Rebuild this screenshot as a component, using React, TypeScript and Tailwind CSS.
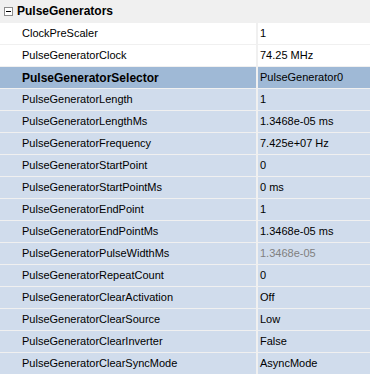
import React from "react";

type Row = { k: string; v: string; kind: "white" | "sel" | "blue"; dim?: boolean };

const rows: Row[] = [
  { k: "ClockPreScaler", v: "1", kind: "white" },
  { k: "PulseGeneratorClock", v: "74.25 MHz", kind: "white" },
  { k: "PulseGeneratorSelector", v: "PulseGenerator0", kind: "sel" },
  { k: "PulseGeneratorLength", v: "1", kind: "blue" },
  { k: "PulseGeneratorLengthMs", v: "1.3468e-05 ms", kind: "blue" },
  { k: "PulseGeneratorFrequency", v: "7.425e+07 Hz", kind: "blue" },
  { k: "PulseGeneratorStartPoint", v: "0", kind: "blue" },
  { k: "PulseGeneratorStartPointMs", v: "0 ms", kind: "blue" },
  { k: "PulseGeneratorEndPoint", v: "1", kind: "blue" },
  { k: "PulseGeneratorEndPointMs", v: "1.3468e-05 ms", kind: "blue" },
  { k: "PulseGeneratorPulseWidthMs", v: "1.3468e-05", kind: "blue", dim: true },
  { k: "PulseGeneratorRepeatCount", v: "0", kind: "blue" },
  { k: "PulseGeneratorClearActivation", v: "Off", kind: "blue" },
  { k: "PulseGeneratorClearSource", v: "Low", kind: "blue" },
  { k: "PulseGeneratorClearInverter", v: "False", kind: "blue" },
  { k: "PulseGeneratorClearSyncMode", v: "AsyncMode", kind: "blue" },
];

export default function App() {
  return (
    <div
      className="w-[370px] h-[374px] overflow-hidden bg-[#f0f0f0] text-[11px] text-black"
      style={{ fontFamily: '"Liberation Sans", Arial, sans-serif' }}
    >
      <div className="h-[22px] flex items-center bg-[#f0f0f0]">
        <div className="ml-[4px] w-[9px] h-[9px] border border-[#8c8c8c] bg-white flex items-center justify-center">
          <div className="w-[5px] h-[1px] bg-black" />
        </div>
        <span className="ml-[4px] font-bold text-[12px]">PulseGenerators</span>
      </div>
      {rows.map((r) => {
        const bg =
          r.kind === "white" ? "bg-white" : r.kind === "sel" ? "bg-[#9fb9d6]" : "bg-[#d0dcec]";
        return (
          <div key={r.k} className="h-[22px] flex border-t border-[#f0f0f0]">
            <div className={`w-[256px] ${bg} flex items-center pl-[22px] ${r.kind === "sel" ? "font-bold text-[12px]" : ""}`}>
              {r.k}
            </div>
            <div className="w-[2px] bg-[#f0f0f0]" />
            <div className={`flex-1 ${bg} flex items-center pl-[2px] ${r.dim ? "text-[#808080]" : ""}`}>{r.v}</div>
          </div>
        );
      })}
    </div>
  );
}
